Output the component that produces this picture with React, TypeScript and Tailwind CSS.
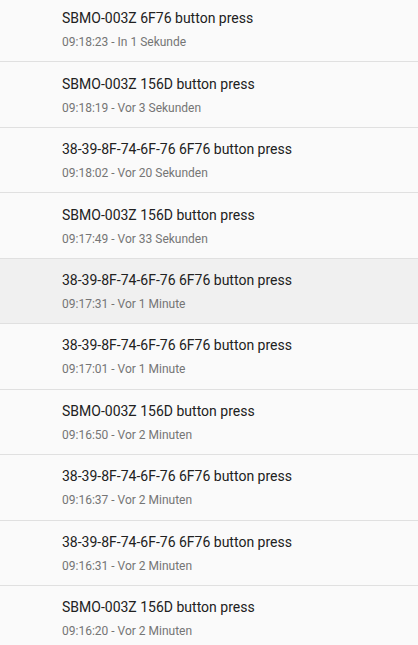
const ENTRIES = [
  { name: "SBMO-003Z 6F76 button press", time: "09:18:23", rel: "In 1 Sekunde" },
  { name: "SBMO-003Z 156D button press", time: "09:18:19", rel: "Vor 3 Sekunden" },
  { name: "38-39-8F-74-6F-76 6F76 button press", time: "09:18:02", rel: "Vor 20 Sekunden" },
  { name: "SBMO-003Z 156D button press", time: "09:17:49", rel: "Vor 33 Sekunden" },
  { name: "38-39-8F-74-6F-76 6F76 button press", time: "09:17:31", rel: "Vor 1 Minute", active: true },
  { name: "38-39-8F-74-6F-76 6F76 button press", time: "09:17:01", rel: "Vor 1 Minute" },
  { name: "SBMO-003Z 156D button press", time: "09:16:50", rel: "Vor 2 Minuten" },
  { name: "38-39-8F-74-6F-76 6F76 button press", time: "09:16:37", rel: "Vor 2 Minuten" },
  { name: "38-39-8F-74-6F-76 6F76 button press", time: "09:16:31", rel: "Vor 2 Minuten" },
  { name: "SBMO-003Z 156D button press", time: "09:16:20", rel: "Vor 2 Minuten" },
];

export default function App() {
  return (
    <div className="h-[645px] overflow-hidden bg-[#fafafa] font-['Roboto',sans-serif]">
      <ul className="-mt-[3px]">
        {ENTRIES.map((e, i) => (
          <li
            key={i}
            className={`flex h-[65.45px] flex-col justify-center border-b border-[#e0e0e0] pl-[62px] ${
              e.active ? "bg-[#f0f0f0]" : ""
            }`}
          >
            <div className="text-[14px] leading-[20px] text-[#212121]">{e.name}</div>
            <div className="mt-[6px] text-[12px] leading-[16px] text-[#757575]">
              {e.time} - {e.rel}
            </div>
          </li>
        ))}
      </ul>
    </div>
  );
}
